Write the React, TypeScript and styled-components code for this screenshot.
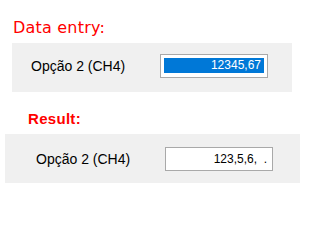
import React from "react";
import styled, { createGlobalStyle } from "styled-components";

const GlobalStyle = createGlobalStyle`
  body {
    margin: 0;
    background: #ffffff;
    font-family: "Liberation Sans", Arial, sans-serif;
  }
`;

const Page = styled.div`
  width: 300px;
  height: 200px;
  overflow: hidden;
  display: flex;
  flex-direction: column;
  padding-top: 18px;
  box-sizing: border-box;
`;

const Section = styled.section<{ $indent: number; $titleIndent: number; $right: number; $top: number }>`
  display: flex;
  flex-direction: column;
  gap: 5px;
  margin-top: ${(p) => p.$top}px;
  margin-left: ${(p) => p.$indent}px;
  margin-right: ${(p) => p.$right}px;

  & > h2 {
    margin-left: ${(p) => p.$titleIndent}px;
  }
`;

const EntryTitle = styled.h2`
  margin: 0;
  height: 20px;
  line-height: 20px;
  font-family: "DejaVu Sans", sans-serif;
  font-weight: normal;
  font-size: 16px;
  letter-spacing: 0.2px;
  color: #ff0000;
`;

const ResultTitle = styled.h2`
  margin: 0;
  height: 20px;
  line-height: 20px;
  font-family: "Liberation Sans", Arial, sans-serif;
  font-weight: bold;
  font-size: 15px;
  letter-spacing: 0.3px;
  color: #ff0000;
`;

const Panel = styled.div<{ $pad: number }>`
  display: flex;
  align-items: center;
  height: 49px;
  padding-left: ${(p) => p.$pad}px;
  background: #f0f0f0;
`;

const Label = styled.span<{ $lift: number }>`
  width: 129px;
  margin-top: ${(p) => -p.$lift}px;
  font-size: 14px;
  color: #000000;
`;

const TextBox = styled.div<{ $lift: number }>`
  width: 108px;
  height: 24px;
  box-sizing: border-box;
  border: 1px solid #a9a9a9;
  background: #ffffff;
  padding: 3px;
  margin-top: ${(p) => -p.$lift}px;
  display: flex;
  align-items: center;
  justify-content: flex-end;
  font-size: 12px;
  color: #000000;
`;

const Selection = styled.span`
  display: block;
  width: 100%;
  height: 15px;
  line-height: 15px;
  padding-right: 3px;
  box-sizing: border-box;
  text-align: right;
  background: #0078d7;
  color: #ffffff;
`;

const Value = styled.span`
  padding-right: 2px;
  white-space: pre;
`;

export default function App() {
  return (
    <>
      <GlobalStyle />
      <Page>
        <Section $indent={12} $titleIndent={1} $right={8} $top={0}>
          <EntryTitle>Data entry:</EntryTitle>
          <Panel $pad={19}>
            <Label $lift={4}>Opção 2 (CH4)</Label>
            <TextBox $lift={4}>
              <Selection>12345,67</Selection>
            </TextBox>
          </Panel>
        </Section>
        <Section $indent={5} $titleIndent={23} $right={0} $top={17}>
          <ResultTitle>Result:</ResultTitle>
          <Panel $pad={31}>
            <Label $lift={0}>Opção 2 (CH4)</Label>
            <TextBox $lift={0}>
              <Value>123,5,6,  .</Value>
            </TextBox>
          </Panel>
        </Section>
      </Page>
    </>
  );
}
